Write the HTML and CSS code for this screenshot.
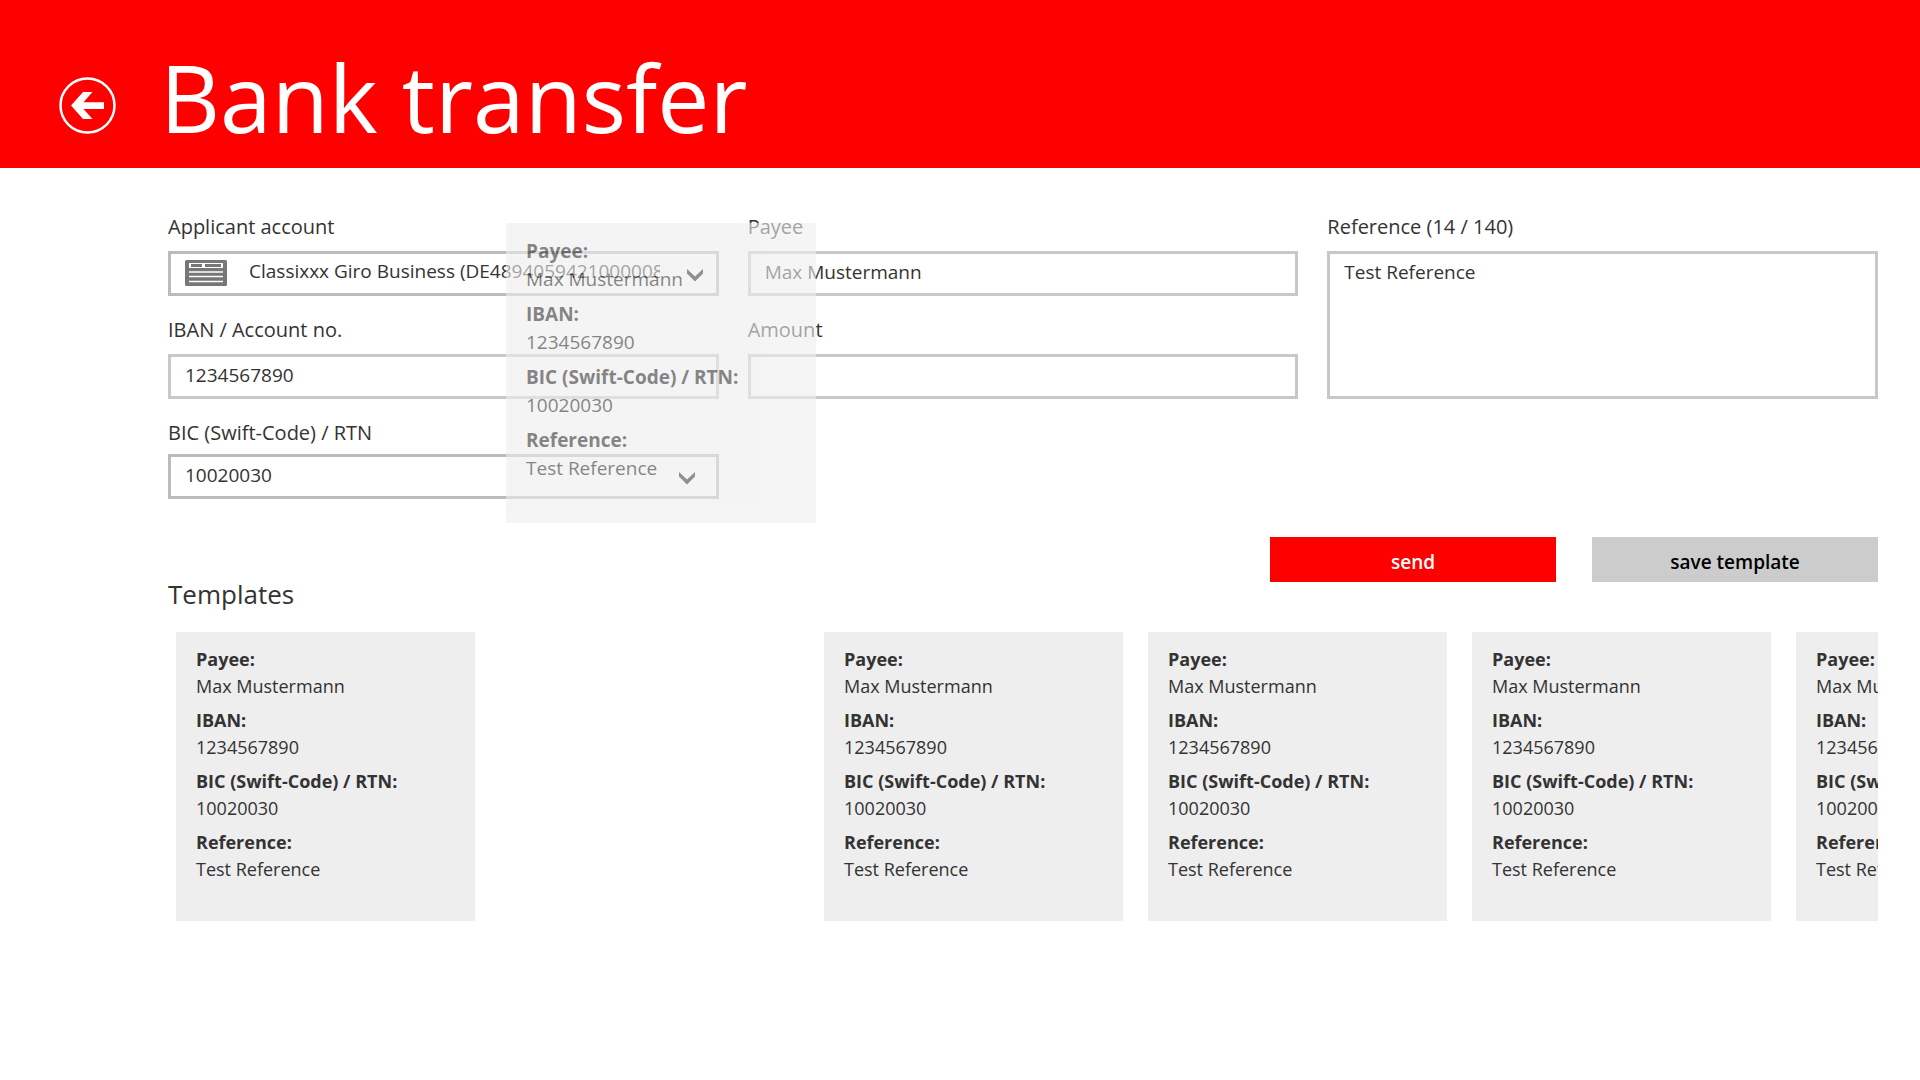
FILE: index.html
```html
<!DOCTYPE html>
<html lang="en">
<head>
<meta charset="utf-8">
<title>Bank transfer</title>
<link rel="stylesheet" href="styles.css">
</head>
<body>
<header class="header">
  <button class="back" type="button" aria-label="Back">
    <svg viewBox="0 0 57 57" width="57" height="57" aria-hidden="true">
      <circle cx="28.5" cy="28.5" r="27" fill="none" stroke="#fff" stroke-width="2.5"/>
      <path d="M12 28.5 24 15h9.500L24.500 25.300H45v6.600H24.500L33.500 42H24z" fill="#fff"/>
    </svg>
  </button>
  <h1 class="title">Bank transfer</h1>
</header>

<main class="content">
  <form class="form">
    <div class="column">
      <div class="field">
        <label for="account">Applicant account</label>
        <div class="picker">
          <select id="account" class="control with-icon">
            <option>Classixxx Giro Business (DE4894059421000008)</option>
          </select>
          <svg class="account-icon" viewBox="0 0 42 26" width="42" height="26" aria-hidden="true">
            <rect width="42" height="26" rx="1.500" fill="#777"/>
            <path d="M4 3h34v5H4z" fill="#fff"/>
            <path d="M6 4h11v3H6zM20 4h16v3H20z" fill="#777"/>
            <path d="M18 3h1.500v5H18z" fill="#fff"/>
            <path d="M4 12h34M4 16.500h34M4 21.500h34" stroke="#fff" stroke-width="1.700"/>
          </svg>
          <svg class="chevron" viewBox="0 0 16 13" width="16" height="13" aria-hidden="true"><path d="M0 0 8 7.500 16 0V4.500L8 12.500 0 4.500z"/></svg>
        </div>
      </div>
      <div class="field">
        <label for="iban">IBAN / Account no.</label>
        <input id="iban" class="control" type="text" value="1234567890">
      </div>
      <div class="field tight">
        <label for="bic">BIC (Swift-Code) / RTN</label>
        <div class="picker">
          <select id="bic" class="control">
            <option>10020030</option>
          </select>
          <svg class="chevron inset" viewBox="0 0 16 13" width="16" height="13" aria-hidden="true"><path d="M0 0 8 7.500 16 0V4.500L8 12.500 0 4.500z"/></svg>
        </div>
      </div>
    </div>
    <div class="column">
      <div class="field">
        <label for="payee">Payee</label>
        <input id="payee" class="control" type="text" value="Max Mustermann">
      </div>
      <div class="field">
        <label for="amount">Amount</label>
        <input id="amount" class="control" type="text">
      </div>
    </div>
    <div class="column">
      <div class="field">
        <label for="reference">Reference (14 / 140)</label>
        <textarea id="reference" class="control area" maxlength="140">Test Reference</textarea>
      </div>
    </div>
    <div class="actions">
      <button class="action send" type="submit">send</button>
      <button class="action save" type="button">save template</button>
    </div>
  </form>

  <section class="templates">
    <h2 class="heading">Templates</h2>
    <div class="strip">
      <dl class="card">
        <dt>Payee:</dt><dd>Max Mustermann</dd>
        <dt>IBAN:</dt><dd>1234567890</dd>
        <dt>BIC (Swift-Code) / RTN:</dt><dd>10020030</dd>
        <dt>Reference:</dt><dd>Test Reference</dd>
      </dl>
      <div class="slot"></div>
      <dl class="card">
        <dt>Payee:</dt><dd>Max Mustermann</dd>
        <dt>IBAN:</dt><dd>1234567890</dd>
        <dt>BIC (Swift-Code) / RTN:</dt><dd>10020030</dd>
        <dt>Reference:</dt><dd>Test Reference</dd>
      </dl>
      <dl class="card">
        <dt>Payee:</dt><dd>Max Mustermann</dd>
        <dt>IBAN:</dt><dd>1234567890</dd>
        <dt>BIC (Swift-Code) / RTN:</dt><dd>10020030</dd>
        <dt>Reference:</dt><dd>Test Reference</dd>
      </dl>
      <dl class="card">
        <dt>Payee:</dt><dd>Max Mustermann</dd>
        <dt>IBAN:</dt><dd>1234567890</dd>
        <dt>BIC (Swift-Code) / RTN:</dt><dd>10020030</dd>
        <dt>Reference:</dt><dd>Test Reference</dd>
      </dl>
      <dl class="card">
        <dt>Payee:</dt><dd>Max Mustermann</dd>
        <dt>IBAN:</dt><dd>1234567890</dd>
        <dt>BIC (Swift-Code) / RTN:</dt><dd>10020030</dd>
        <dt>Reference:</dt><dd>Test Reference</dd>
      </dl>
    </div>
  </section>
</main>

<dl class="card dragged">
  <dt>Payee:</dt><dd>Max Mustermann</dd>
  <dt>IBAN:</dt><dd>1234567890</dd>
  <dt>BIC (Swift-Code) / RTN:</dt><dd>10020030</dd>
  <dt>Reference:</dt><dd>Test Reference</dd>
</dl>
</body>
</html>
```
FILE: styles.css
```css
* {
  box-sizing: border-box;
}

body {
  position: relative;
  margin: 0;
  background: #fff;
  color: #333;
  font-family: "Open Sans", "Noto Sans", sans-serif;
  font-size: 19px;
  line-height: 28px;
}

.header {
  display: flex;
  gap: 44px;
  height: 168px;
  padding: 28px 43px 0 59px;
  background: #f00;
  color: #fff;
}

.back {
  align-self: flex-start;
  width: 57px;
  height: 57px;
  margin-top: 49px;
  padding: 0;
  border: 0;
  background: none;
}

.back svg {
  display: block;
}

.title {
  margin: 0;
  font-size: 93px;
  font-weight: 400;
  line-height: 138px;
  white-space: nowrap;
}

.content {
  padding: 45px 42px 0 168px;
}

.form {
  display: grid;
  grid-template-columns: repeat(3, minmax(0, 1fr));
  column-gap: 29px;
}

.column {
  display: flex;
  flex-direction: column;
  gap: 20px;
}

.field {
  display: flex;
  flex-direction: column;
  gap: 10px;
}

.field label {
  font-size: 20px;
}

.tight {
  gap: 7px;
}

.control {
  display: block;
  width: 100%;
  height: 45px;
  margin: 0;
  padding: 0 14px 4px;
  border: 3px solid #c8c8c8;
  border-radius: 0;
  outline: 0;
  background: #fff;
  color: #333;
  font: inherit;
  appearance: none;
}

.area {
  height: 148px;
  padding-top: 4px;
  resize: none;
}

.picker {
  position: relative;
}

.picker .control {
  padding-right: 56px;
  border-color: #bbb;
}

.picker .with-icon {
  padding-bottom: 6px;
  padding-left: 78px;
}

.account-icon {
  position: absolute;
  top: 9px;
  left: 17px;
  pointer-events: none;
}

.chevron {
  position: absolute;
  top: 18px;
  right: 16px;
  pointer-events: none;
}

.inset {
  right: 24px;
}

.actions {
  display: flex;
  grid-column: 1 / -1;
  justify-content: flex-end;
  gap: 36px;
  margin-top: 38px;
}

.action {
  width: 286px;
  height: 45px;
  padding: 5px 0 0;
  border: 0;
  font: inherit;
  font-weight: 600;
}

.send {
  background: #f00;
  color: #fff;
}

.save {
  background: #ccc;
  color: #000;
}

.heading {
  margin: -6px 0 0;
  font-size: 26px;
  font-weight: 400;
  line-height: 36px;
}

.strip {
  display: flex;
  gap: 25px;
  margin-top: 20px;
  padding-left: 8px;
  overflow: hidden;
}

.card,
.slot {
  flex: none;
  width: 299px;
  height: 289px;
  margin: 0;
}

.card {
  padding: 14px 20px;
  background: #eee;
  font-size: 18px;
  line-height: 27px;
  white-space: nowrap;
}

.card dt {
  font-weight: 700;
}

.card dd {
  margin: 0 0 7px;
}

.dragged {
  position: absolute;
  top: 223px;
  left: 506px;
  width: 310px;
  height: 300px;
  font-size: 19px;
  line-height: 28px;
  opacity: 0.6;
}
```
